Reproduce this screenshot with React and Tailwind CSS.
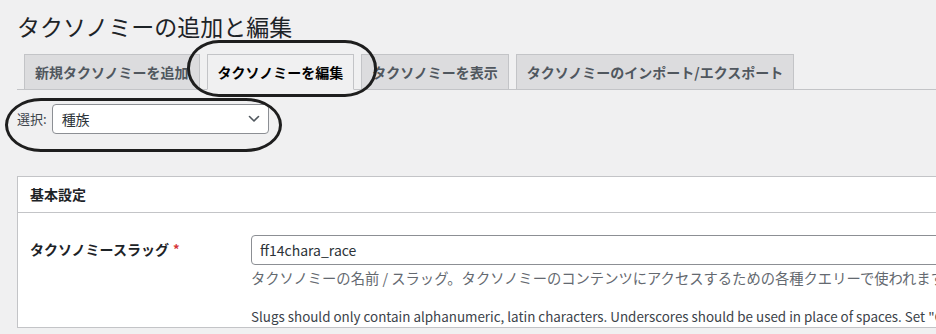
const tabs = [
  { label: "新規タクソノミーを追加", active: false },
  { label: "タクソノミーを編集", active: true },
  { label: "タクソノミーを表示", active: false },
  { label: "タクソノミーのインポート/エクスポート", active: false },
];

function Chevron() {
  return (
    <svg width="12" height="8" viewBox="0 0 12 8" fill="none">
      <path d="M1.5 1.5 L6 6 L10.5 1.5" stroke="#50575e" strokeWidth="1.6" strokeLinecap="round" strokeLinejoin="round" />
    </svg>
  );
}

export default function App() {
  return (
    <div
      className="relative w-[936px] h-[334px] overflow-hidden bg-[#f0f0f1] text-[#3c434a]"
      style={{ fontFamily: '"Noto Sans CJK JP", "Noto Sans", sans-serif' }}
    >
      <div className="pl-[17px] w-[1300px]">
        <h1 className="mt-[11px] h-[30px] leading-[30px] text-[23px] font-normal text-[#1d2327]">
          タクソノミーの追加と編集
        </h1>

        <div className="mt-[13px] flex border-b border-[#c3c4c7]">
          {tabs.map((t) => (
            <div
              key={t.label}
              className={
                t.active
                  ? "ml-[7px] -mb-px h-[36px] px-[10px] py-[5px] border border-[#c3c4c7] border-b-[#f0f0f1] bg-[#f0f0f1] text-[14px] leading-[24px] font-semibold text-black whitespace-nowrap"
                  : "ml-[7px] -mb-px h-[36px] px-[10px] py-[5px] border border-[#c3c4c7] bg-[#dcdcde] text-[14px] leading-[24px] font-semibold text-[#50575e] whitespace-nowrap"
              }
            >
              {t.label}
            </div>
          ))}
        </div>

        <div className="mt-[14px] flex items-center h-[30px]">
          <span className="text-[13px] text-[#3c434a] mr-[5px]">選択:</span>
          <div className="w-[217px] h-[30px] flex items-center justify-between border border-[#8c8f94] rounded-[4px] bg-white pl-[9px] pr-[8px]">
            <span className="text-[14px] text-[#2c3338]">種族</span>
            <Chevron />
          </div>
        </div>

        <div className="mt-[42px] border border-[#c3c4c7] bg-white">
          <div className="h-[36px] flex items-center px-[12px] border-b border-[#c3c4c7]">
            <h2 className="text-[14px] font-semibold text-[#1d2327]">基本設定</h2>
          </div>
          <div className="flex pt-[22px]">
            <div className="w-[233px] shrink-0 pl-[12px] pt-[4px] text-[14px] font-semibold text-[#1d2327] whitespace-nowrap">
              タクソノミースラッグ
              <span className="text-[#d63638] ml-[4px] text-[13px] align-top">*</span>
            </div>
            <div className="flex-1">
              <div className="w-[800px] h-[30px] flex items-center border border-[#8c8f94] rounded-[4px] px-[8px] text-[14px] text-[#2c3338]">
                ff14chara_race
              </div>
              <p className="mt-[2px] text-[14.3px] leading-[22px] text-[#646970] whitespace-nowrap">
                タクソノミーの名前 / スラッグ。タクソノミーのコンテンツにアクセスするための各種クエリーで使われます。
              </p>
              <p className="mt-[16px] text-[13.4px] leading-[22px] text-[#3c434a] whitespace-nowrap">
                Slugs should only contain alphanumeric, latin characters. Underscores should be used in place of spaces. Set "Custom Rewrite Slug" field to make slug use dashes for URLs.
              </p>
            </div>
          </div>
        </div>
      </div>

      <div className="absolute left-[187px] top-[40px] w-[190px] h-[57px] border-[3px] border-[#1e1e1e] rounded-[32px/28px]" />
      <div className="absolute left-[5px] top-[98px] w-[277px] h-[54px] border-[3px] border-[#1e1e1e] rounded-[36px/27px]" />
    </div>
  );
}
